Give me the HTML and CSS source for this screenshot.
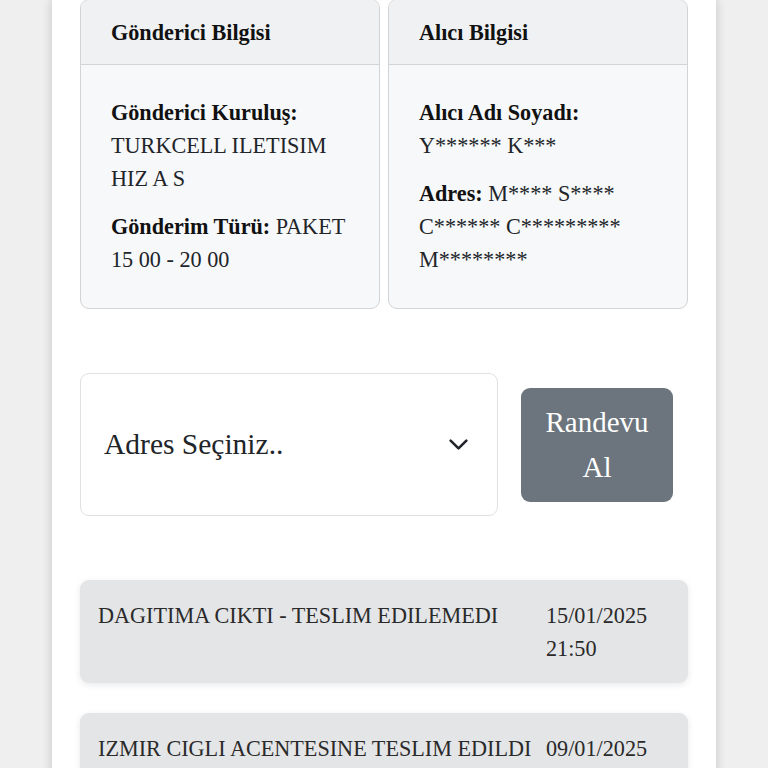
FILE: index.html
```html
<!DOCTYPE html>
<html lang="tr">
<head>
<meta charset="utf-8">
<link rel="stylesheet" href="styles.css">
</head>
<body>
<div class="panel">
  <div class="cards">
    <div class="card">
      <div class="card-header">Gönderici Bilgisi</div>
      <div class="card-body">
        <p><b>Gönderici Kuruluş:</b> TURKCELL ILETISIM HIZ A S</p>
        <p><b>Gönderim Türü:</b> PAKET 15 00 - 20 00</p>
      </div>
    </div>
    <div class="card">
      <div class="card-header">Alıcı Bilgisi</div>
      <div class="card-body">
        <p><b>Alıcı Adı Soyadı:</b> Y****** K***</p>
        <p><b>Adres:</b> M**** S**** C****** C********* M********</p>
      </div>
    </div>
  </div>
  <div class="appointment">
    <div class="select">
      <span class="select-text">Adres Seçiniz..</span>
      <svg class="chevron" viewBox="0 0 16 16" width="21" height="21"><path d="M2 5l6 6 6-6" fill="none" stroke="#212529" stroke-width="2" stroke-linecap="round" stroke-linejoin="round"/></svg>
    </div>
    <div class="btn">Randevu Al</div>
  </div>
  <div class="events">
    <div class="event">
      <div class="event-desc">DAGITIMA CIKTI - TESLIM EDILEMEDI</div>
      <div class="event-date">15/01/2025 21:50</div>
    </div>
    <div class="event">
      <div class="event-desc">IZMIR CIGLI ACENTESINE TESLIM EDILDI</div>
      <div class="event-date">09/01/2025 14:32</div>
    </div>
  </div>
</div>
</body>
</html>
```
FILE: styles.css
```css
html, body {
  margin: 0;
  padding: 0;
}
body {
  background: #efefef;
  font-family: "Liberation Serif", "Times New Roman", serif;
  color: #212529;
  font-size: 22.2px;
  line-height: 33px;
  overflow: hidden;
  height: 768px;
}
.panel {
  margin-left: 52px;
  width: 608px;
  padding: 0 28px 40px;
  background: #fff;
  box-shadow: 0 0 10px rgba(0,0,0,0.18);
  min-height: 900px;
}
.cards {
  display: flex;
  gap: 8px;
  margin-top: -1px;
}
.card {
  flex: 1;
  border: 1.5px solid #d3d4d6;
  border-radius: 9px;
  overflow: hidden;
  background: #f7f8f9;
  display: flex;
  flex-direction: column;
}
.card-header {
  background: #f0f1f3;
  border-bottom: 1.5px solid #d3d4d6;
  padding: 16px 30px 15px;
  font-weight: bold;
  color: #111;
}
.card-body {
  padding: 31px 30px 17px;
  flex: 1;
}
.card-body p {
  margin: 0 0 15px;
}
.card-body b {
  color: #111;
}
.appointment {
  display: flex;
  align-items: center;
  gap: 23px;
  margin-top: 64px;
  padding-right: 15px;
}
.select {
  width: 418px;
  height: 143px;
  box-sizing: border-box;
  border: 1.5px solid #dfe1e4;
  border-radius: 9px;
  background: #fff;
  display: flex;
  align-items: center;
  justify-content: space-between;
  padding: 0 28px 0 23px;
}
.select-text {
  font-size: 29.5px;
  color: #212529;
}
.chevron {
  display: block;
}
.btn {
  width: 152px;
  height: 114px;
  box-sizing: border-box;
  background: #6c757d;
  color: #fff;
  border-radius: 9px;
  font-size: 29px;
  line-height: 45px;
  text-align: center;
  padding: 12px 18px;
}
.events {
  margin-top: 64px;
  display: flex;
  flex-direction: column;
  gap: 30px;
}
.event {
  display: flex;
  gap: 14px;
  background: #e4e5e7;
  border-radius: 9px;
  box-shadow: 0 2px 7px rgba(0,0,0,0.09);
  padding: 19px 18px 18px 18px;
  color: #2a2a2a;
}
.event-desc {
  flex: 1;
}
.event-date {
  width: 124px;
}
```
